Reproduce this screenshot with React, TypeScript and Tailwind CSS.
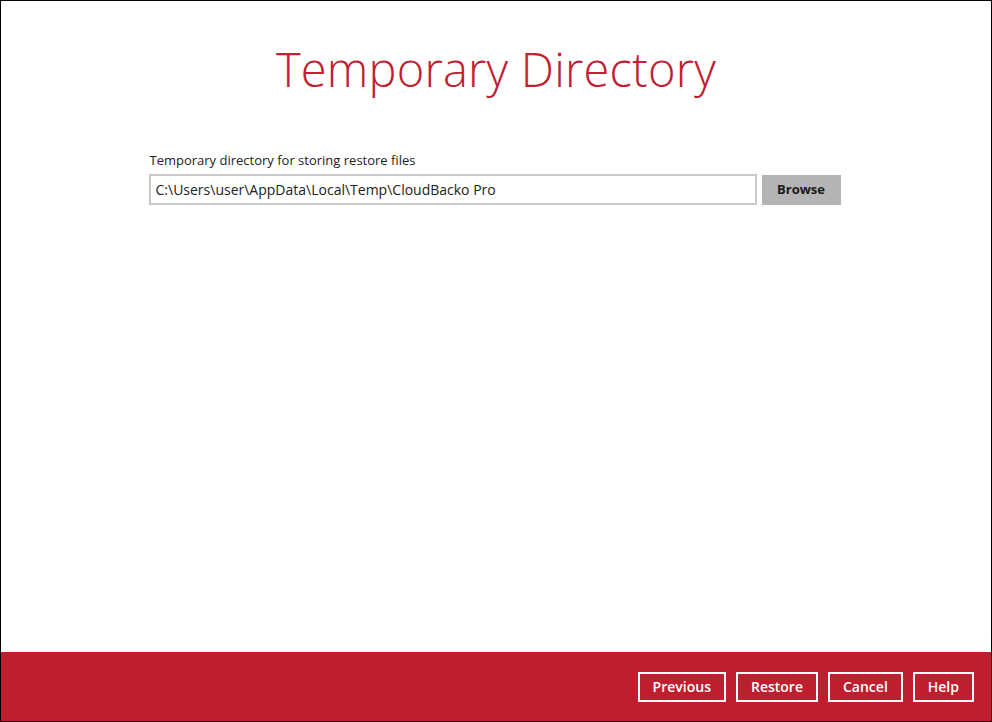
import React from "react";

const FONT = { fontFamily: '"Open Sans", "Noto Sans", sans-serif' };

const footerButtons = ["Previous", "Restore", "Cancel", "Help"];

export default function App() {
  return (
    <div style={FONT} className="w-[992px] h-[722px] border border-black bg-white flex flex-col overflow-hidden">
      <div className="flex-1 flex flex-col">
        <h1 className="mt-[45px] text-center text-[47px] leading-none font-light text-[#c0202f] tracking-[0.2px]">
          Temporary Directory
        </h1>

        <div className="w-[693px] mx-auto mt-[58px] -translate-x-[1px]">
          <label className="block text-[13px] leading-[18px] text-[#222] pl-[1px]">
            Temporary directory for storing restore files
          </label>
          <div className="flex gap-[5px] mt-[5px]">
            <input
              readOnly
              value="C:\Users\user\AppData\Local\Temp\CloudBacko Pro"
              className="w-[608px] h-[31px] border-2 border-[#c9c9c9] px-[5px] text-[14px] text-[#222] outline-none"
              style={FONT}
            />
            <button className="w-[79px] h-[30px] mt-[1px] bg-[#b4b4b4] text-[13px] font-bold text-[#1a1a1a]">
              Browse
            </button>
          </div>
        </div>
      </div>

      <div className="h-[69px] bg-[#be1e2d] flex items-center justify-end gap-[10px] pr-[17px]">
        {footerButtons.map((b) => (
          <button
            key={b}
            className="h-[30px] px-[13px] border-2 border-white text-white text-[14px] font-semibold leading-none"
          >
            {b}
          </button>
        ))}
      </div>
    </div>
  );
}
